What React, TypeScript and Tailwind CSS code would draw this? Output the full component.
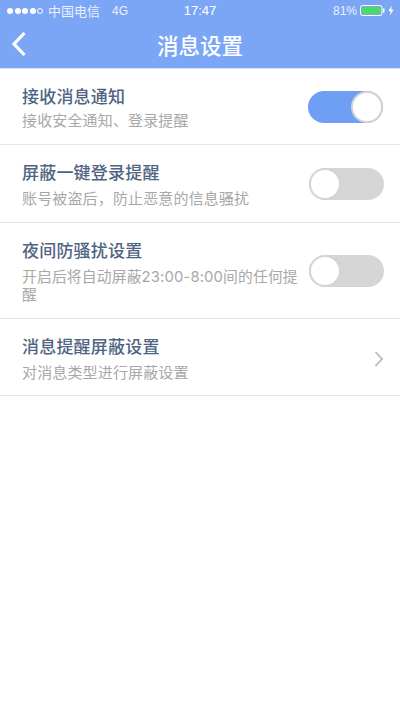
import React from "react";

function Toggle({ on }: { on: boolean }) {
  return (
    <div className={`relative w-[75px] h-[32px] rounded-full shrink-0 ${on ? "bg-[#6f9ff5] mr-[1px]" : "bg-[#d6d6d6]"}`}>
      <div
        className={`absolute top-0 w-[32px] h-[32px] rounded-full bg-white border-[2px] border-[#d4d4d4] ${on ? "right-0" : "left-0"}`}
      />
    </div>
  );
}

function Row({
  title,
  sub,
  right,
  h,
  subClass,
}: {
  title: string;
  sub: string;
  right: React.ReactNode;
  h: string;
  subClass: string;
}) {
  return (
    <div className={`flex items-start pl-[22px] pr-[16px] border-b border-[#e6e6e8] ${h}`}>
      <div className="flex-1 min-w-0">
        <div className="text-[17px] leading-[22px] font-medium text-[#4f6482] mt-[16px] tracking-[0.2px]">{title}</div>
        <div className={`leading-[18px] text-[#a8a8a8] ${subClass}`}>{sub}</div>
      </div>
      {right}
    </div>
  );
}

const subBase = "text-[15px] tracking-[0.15px]";

export default function App() {
  return (
    <div className="w-[400px] h-[711px] bg-white overflow-hidden font-['Noto_Sans_CJK_SC','Noto_Sans',sans-serif]">
      <div className="h-[69px] bg-[#7ba6f6] border-b border-[#d9e3f5] text-white">
        <div className="h-[21px] flex items-center relative text-[13px] pl-[7px] pr-[6px]">
          <div className="flex items-center gap-[1.5px]">
            {[0, 1, 2, 3].map((i) => (
              <span key={i} className="w-[6px] h-[6px] rounded-full bg-white" />
            ))}
            <span className="w-[6px] h-[6px] rounded-full border border-white" />
          </div>
          <span className="ml-[5px] text-[#eaf0fd]">中国电信</span>
          <span className="ml-[12px] text-[#eaf0fd] text-[12px] font-['Liberation_Sans',sans-serif]">4G</span>
          <span className="absolute left-0 right-0 text-center text-[13px] font-medium pointer-events-none font-['Liberation_Sans',sans-serif]">17:47</span>
          <div className="ml-auto flex items-center font-['Liberation_Sans',sans-serif]">
            <span className="text-[12px] text-[#eaf0fd]">81%</span>
            <svg width="25" height="11" viewBox="0 0 25 11" className="ml-[3px]">
              <rect x="0.5" y="0.5" width="21.5" height="10" rx="2" fill="none" stroke="#fff" />
              <rect x="2" y="2" width="18.5" height="7" fill="#4cd964" />
              <rect x="23" y="3.5" width="1.5" height="4" fill="#fff" />
            </svg>
            <svg width="6" height="11" viewBox="0 0 7 11" className="ml-[3px]">
              <path d="M4.2 0 L0.5 6.2 H3 L2.4 11 L6.5 4.5 H3.8 Z" fill="#fff" />
            </svg>
          </div>
        </div>
        <div className="h-[47px] flex items-center relative">
          <svg width="16" height="26" viewBox="0 0 16 26" className="ml-[11px] absolute left-0 top-[10px]">
            <path d="M13.5 2 L3 13 L13.5 24" fill="none" stroke="#fff" strokeWidth="3.2" />
          </svg>
          <div className="w-full text-center text-[21.5px] font-medium leading-[28px]">消息设置</div>
        </div>
      </div>

      <Row h="h-[76px]" subClass={`mt-[4px] ${subBase}`} title="接收消息通知" sub="接收安全通知、登录提醒" right={<div className="mt-[22px]"><Toggle on /></div>} />
      <Row h="h-[78px]" subClass={`mt-[6px] ${subBase}`} title="屏蔽一键登录提醒" sub="账号被盗后，防止恶意的信息骚扰" right={<div className="mt-[23px]"><Toggle on={false} /></div>} />
      <Row
        h="h-[96px]"
        subClass="mt-[7px] pr-[8px] text-[14.8px] tracking-[0.15px] font-['Inter','Noto_Sans_CJK_SC',sans-serif]"
        title="夜间防骚扰设置"
        sub="开启后将自动屏蔽23:00-8:00间的任何提醒"
        right={<div className="mt-[32px]"><Toggle on={false} /></div>}
      />
      <Row
        h="h-[77px]"
        subClass={`mt-[6px] ${subBase}`}
        title="消息提醒屏蔽设置"
        sub="对消息类型进行屏蔽设置"
        right={
          <svg width="10" height="16" viewBox="0 0 10 16" className="mt-[32px]">
            <path d="M1.5 1 L8 8 L1.5 15" fill="none" stroke="#b8b8b8" strokeWidth="1.8" />
          </svg>
        }
      />
    </div>
  );
}
